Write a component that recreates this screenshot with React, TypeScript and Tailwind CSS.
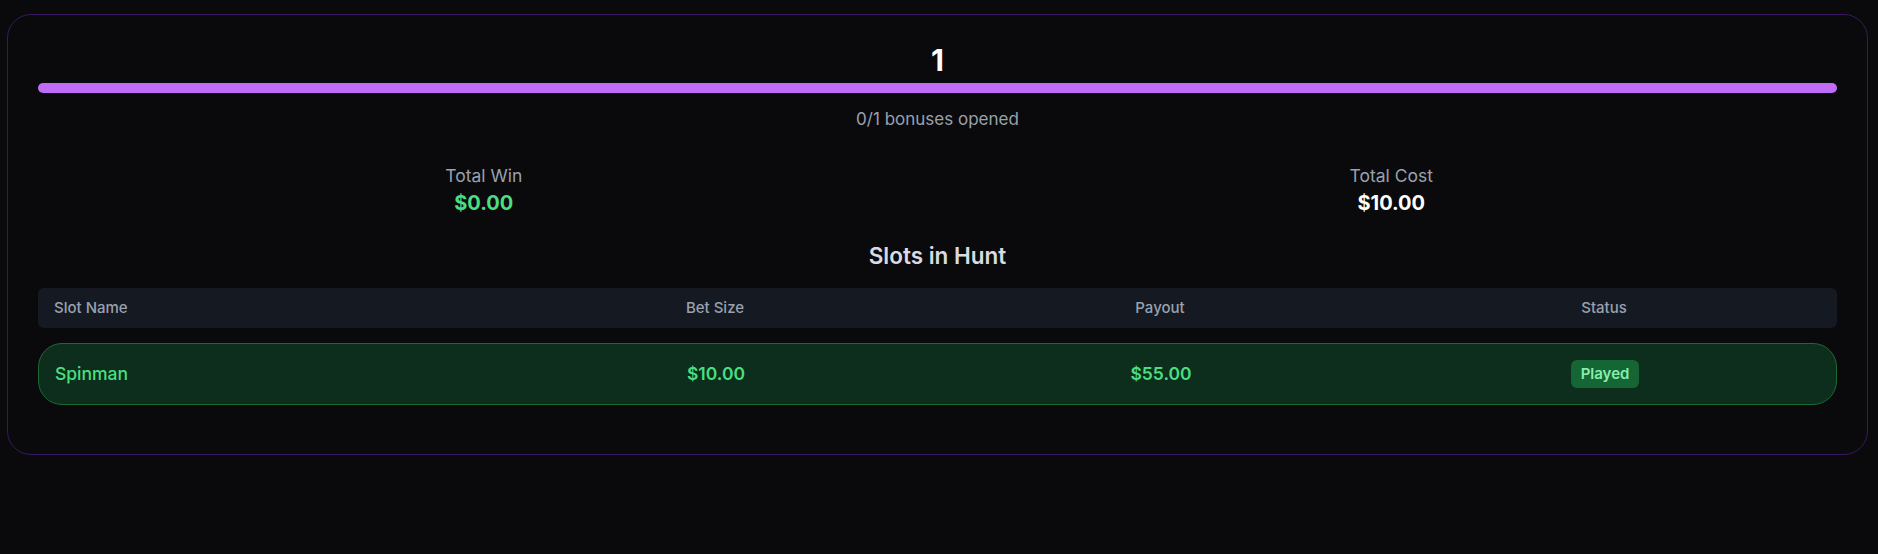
import React from 'react'

const slots = [{ name: 'Spinman', bet: '$10.00', payout: '$55.00', status: 'Played' }]

const cols = 'grid-cols-[443px_468px_422px_466px]'

export default function App() {
  const opened = 0
  const total = 1
  return (
    <div className="min-h-screen bg-[#0a0a0c] pl-[7px] pr-[10px] pt-[14px] font-['Inter',sans-serif]">
      <div className="rounded-3xl border border-[#3a1763] px-[30px] pt-[27px] pb-[49px]">
        <h1 className="text-center text-3xl leading-9 font-bold text-white">{total}</h1>
        <div className="mt-[5px] h-[10px] w-full rounded-full bg-[#c06cf7]" />
        <p className="mt-[14px] text-center text-[17px] leading-6 text-gray-400">
          {opened}/{total} bonuses opened
        </p>

        {/* totals */}
        <div className="mt-[32px] grid grid-cols-2 gap-4 text-center">
          <div>
            <p className="text-[17.5px] leading-[25px] text-gray-400">Total Win</p>
            <p className="mt-px text-xl leading-7 font-bold text-[#4ade80]">$0.00</p>
          </div>
          <div>
            <p className="text-[17.5px] leading-[25px] text-gray-400">Total Cost</p>
            <p className="mt-px text-xl leading-7 font-bold text-white">$10.00</p>
          </div>
        </div>

        <h2 className="mt-[23px] text-center text-[22.5px] leading-8 font-semibold text-[#d9dbe1]">
          Slots in Hunt
        </h2>

        <div className={`mt-4 grid h-10 ${cols} items-center rounded-md bg-[#151922] text-[15px] leading-5 font-medium text-gray-400`}>
          <div className="px-4">Slot Name</div>
          <div className="text-center">Bet Size</div>
          <div className="text-center">Payout</div>
          <div className="text-center">Status</div>
        </div>

        {slots.map((s) => (
          <div
            key={s.name}
            className={`mt-[15px] grid h-[62px] ${cols} items-center rounded-3xl border border-[#1b6a36] bg-[#0d2e1c] text-[17.5px] leading-6 font-medium text-[#4ade80]`}
          >
            <div className="px-4">{s.name}</div>
            <div className="text-center font-semibold">{s.bet}</div>
            <div className="text-center font-semibold">{s.payout}</div>
            <div className="flex justify-center">
              <span className="rounded-md bg-[#166534] px-[10px] py-1 text-[15px] leading-5 font-semibold text-[#86efac]">
                {s.status}
              </span>
            </div>
          </div>
        ))}
      </div>
    </div>
  )
}
